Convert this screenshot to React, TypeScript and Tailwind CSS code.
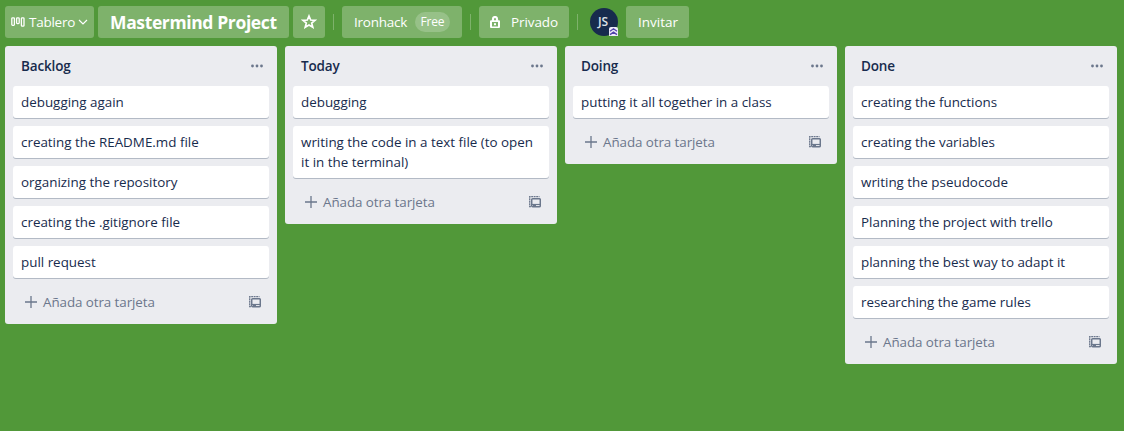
import type { ReactNode } from "react";

type Column = { title: string; cards: string[] };

const columns: Column[] = [
  {
    title: "Backlog",
    cards: [
      "debugging again",
      "creating the README.md file",
      "organizing the repository",
      "creating the .gitignore file",
      "pull request",
    ],
  },
  { title: "Today", cards: ["debugging", "writing the code in a text file (to open it in the terminal)"] },
  { title: "Doing", cards: ["putting it all together in a class"] },
  {
    title: "Done",
    cards: [
      "creating the functions",
      "creating the variables",
      "writing the pseudocode",
      "Planning the project with trello",
      "planning the best way to adapt it",
      "researching the game rules",
    ],
  },
];

function BoardIcon() {
  return (
    <svg width="14" height="10" viewBox="0 0 14 10" fill="none" stroke="currentColor" strokeWidth="1.3" className="shrink-0">
      <rect x="0.8" y="0.8" width="2.6" height="7.6" rx="0.8" />
      <rect x="5.6" y="0.8" width="2.6" height="5.8" rx="0.8" />
      <rect x="10.4" y="0.8" width="2.6" height="8.4" rx="0.8" />
    </svg>
  );
}

function LockIcon() {
  return (
    <svg width="10" height="12" viewBox="0 0 10 12" fill="none" className="shrink-0">
      <path d="M3 5V3a2 2 0 0 1 4 0v2" stroke="currentColor" strokeWidth="2.2" />
      <path
        fill="currentColor"
        fillRule="evenodd"
        d="M1 4.2h8a1 1 0 0 1 1 1V11a1 1 0 0 1-1 1H1a1 1 0 0 1-1-1V5.2a1 1 0 0 1 1-1ZM2 6v4.4h6V6H2Z"
      />
      <rect x="4" y="7.2" width="2" height="2" fill="currentColor" />
    </svg>
  );
}

function TemplateIcon() {
  return (
    <svg width="12" height="12" viewBox="0 0 12 12" fill="none" stroke="currentColor" className="shrink-0">
      <path d="M1.9 10.5H0.7V0.7H10.5" strokeWidth="1.3" strokeDasharray="1.9 0.6" />
      <rect x="2.7" y="2.7" width="8.6" height="8" rx="1" strokeWidth="1.5" />
      <path d="M3 8.500h8" strokeWidth="1.2" />
      <path d="M4 9.600h3" strokeWidth="1.2" />
    </svg>
  );
}

function HeaderButton({ className, children }: { className: string; children: ReactNode }) {
  return (
    <button className={`flex h-8 shrink-0 items-center rounded-[3px] bg-[#7eb26b] text-left whitespace-nowrap ${className}`}>
      {children}
    </button>
  );
}

function Divider() {
  return <span className="mx-2 h-4 w-px shrink-0 bg-[#7eb26b]" />;
}

function Header() {
  return (
    <header className="flex h-[46px] items-center px-[5px] pb-0.5 text-[13.5px] leading-5 text-white">
      <HeaderButton className="mr-1 w-[89px] pl-1.5">
        <BoardIcon />
        <span className="ml-1 w-[45px] tracking-[-0.25px]">Tablero</span>
        <svg width="10" height="6" viewBox="0 0 10 6" fill="none" stroke="currentColor" strokeWidth="1.2" className="ml-1 shrink-0">
          <path d="M1 1l4 4 4-4" />
        </svg>
      </HeaderButton>
      <HeaderButton className="mr-1 w-[191px] pl-3">
        <h1 className="text-[17.5px] font-bold tracking-[-0.37px]">Mastermind Project</h1>
      </HeaderButton>
      <HeaderButton className="w-8 justify-center">
        <svg width="16" height="16" viewBox="0 0 16 16" fill="none" stroke="currentColor" strokeWidth="1.7">
          <path d="M8 2l1.700 4 4.300.300-3.300 2.800 1.100 4.200L8 11.100l-3.800 2.200 1.100-4.200L2 6.300 6.300 6z" />
        </svg>
      </HeaderButton>
      <Divider />
      <HeaderButton className="w-[120px] pl-3">
        <span className="w-[61px] tracking-[-0.25px]">Ironhack</span>
        <span className="flex h-5 w-[35px] items-center justify-center rounded-full bg-[#97c188] text-[12px] tracking-[-0.2px]">
          Free
        </span>
      </HeaderButton>
      <Divider />
      <HeaderButton className="w-[90px] gap-[11px] pl-[11px]">
        <LockIcon />
        <span className="tracking-[-0.1px]">Privado</span>
      </HeaderButton>
      <Divider />
      <div className="relative mr-2 ml-1 flex size-7 shrink-0 items-center justify-center rounded-full bg-[#172b4d] text-[12px] font-semibold">
        <span className="pr-0.5 text-[#dfe1e6]">JS</span>
        <svg width="9" height="9" viewBox="0 0 9 9" fill="none" className="absolute right-0 bottom-0">
          <path d="M0 2Q0 0 2 0h5q2 0 2 2v7H0z" fill="#edebf8" />
          <path d="M1 4.3l3.500-2.500 3.500 2.500M1 7.600l3.500-2.500 3.500 2.500" stroke="#5243aa" strokeWidth="1.300" />
        </svg>
      </div>
      <HeaderButton className="w-[63px] pl-3">
        <span>Invitar</span>
      </HeaderButton>
    </header>
  );
}

function List({ title, cards }: Column) {
  return (
    <section className="flex w-[272px] shrink-0 flex-col rounded-[3px] bg-[#ebecf0]">
      <div className="flex h-10 items-center justify-between pr-3.5 pl-4">
        <h2 className="text-[13.5px] leading-5 font-semibold tracking-[-0.15px]">{title}</h2>
        <svg width="12" height="4" viewBox="0 0 12 4" fill="#6b778c">
          <circle cx="1.500" cy="2" r="1.400" />
          <circle cx="6" cy="2" r="1.400" />
          <circle cx="10.500" cy="2" r="1.400" />
        </svg>
      </div>
      <div className="flex flex-col gap-2 px-2">
        {cards.map((card) => (
          <article
            key={card}
            className="rounded-[3px] bg-white px-2 py-1.5 text-[13.4px] leading-5 shadow-[0_1px_0_#b3bac5]"
          >
            {card}
          </article>
        ))}
      </div>
      <div className="flex h-[46px] items-center pt-0.5 pr-4 pl-5 text-[13.4px] leading-5 text-[#6b778c]">
        <svg width="12" height="12" viewBox="0 0 12 12" stroke="currentColor" strokeWidth="1.300" className="shrink-0">
          <path d="M6 0v12M0 6h12" />
        </svg>
        <span className="ml-1.5 flex-1 tracking-[-0.08px]">Añada otra tarjeta</span>
        <TemplateIcon />
      </div>
    </section>
  );
}

export default function App() {
  return (
    <main className="h-[431px] w-[1124px] overflow-hidden bg-[#519839] font-['Open_Sans','Noto_Sans',sans-serif] text-[#172b4d]">
      <Header />
      <div className="flex items-start gap-2 px-[5px]">
        {columns.map((column) => (
          <List key={column.title} {...column} />
        ))}
      </div>
    </main>
  );
}
